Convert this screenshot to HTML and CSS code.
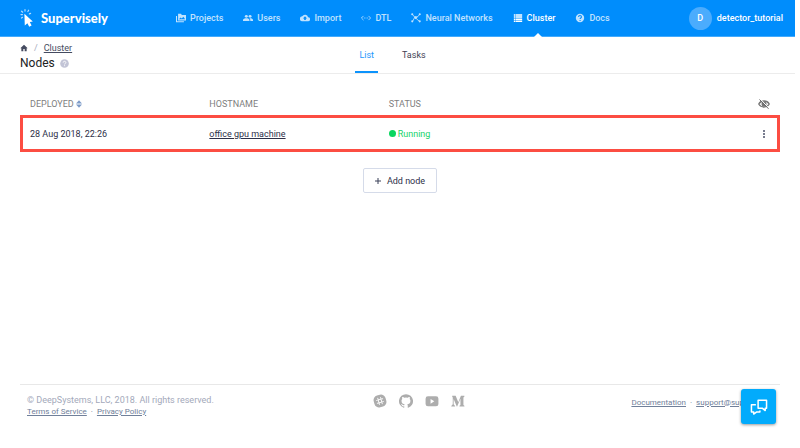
FILE: index.html
```
<!DOCTYPE html>
<html lang="en">
<head>
<meta charset="utf-8">
<meta name="viewport" content="width=device-width, initial-scale=1">
<title>Nodes - Supervisely</title>
<link rel="stylesheet" href="styles.css">
</head>
<body>
<header class="topbar">
  <a class="brand" href="#">
    <svg class="brand-mark" viewBox="0 0 14 18" aria-hidden="true"><path d="M4.400 4.800 12.800 12.400 9.800 13 11.600 16.600 9.200 17.800 7.400 14.200 4.800 16.400z" fill="#fff"/><path d="M1 5.600h1.400M1.600 2.200l1.100 1M5 .6v1.500M8.600 1.200 7.900 2.500M1.500 9l1-.7M10.600 4.400l-1.200.5" stroke="#fff" stroke-width="1.200" stroke-linecap="round" opacity=".7"/></svg>
    <span>Supervisely</span>
  </a>
  <nav class="nav" aria-label="Main">
    <a href="#"><svg viewBox="0 0 24 24" aria-hidden="true"><path fill="currentColor" fill-rule="evenodd" d="M0 7h2.500v12.500H19V22H0zM5 2h7l2 3h10v13H5zM7 15h15l-4.500-6-3.500 4-3-2.500z"/></svg>Projects</a>
    <a href="#"><svg viewBox="0 0 24 24" aria-hidden="true"><circle cx="8" cy="8" r="3.500" fill="currentColor"/><circle cx="17" cy="8" r="3.500" fill="currentColor"/><path fill="currentColor" d="M0 19v-2c0-3 4-4.500 8-4.500s7.500 1.500 7.500 4.500v2zM17.500 19v-2c0-2-.8-3.200-2-4.300 4-.4 8.500 1 8.500 4.300v2z"/></svg>Users</a>
    <a href="#"><svg viewBox="0 0 24 24" aria-hidden="true"><path fill="currentColor" fill-rule="evenodd" d="M19.400 10A7.500 7.500 0 0 0 5.400 8 6 6 0 0 0 6 20h13a5 5 0 0 0 .4-10zM14 13v4h-4v-4H7l5-5 5 5z"/></svg>Import</a>
    <a href="#"><svg viewBox="0 0 24 24" fill="none" stroke="currentColor" stroke-width="2" aria-hidden="true"><path d="M6 7 1 12l5 5M18 7l5 5-5 5"/><path d="M7 12h2M11 12h2M15 12h2"/></svg>DTL</a>
    <a href="#"><svg viewBox="0 0 24 24" fill="none" stroke="currentColor" stroke-width="2" aria-hidden="true"><path d="M3 3l6 7 7-1 5-6M9 10 4 20M9 10l11 10M16 9l-6 5"/><g fill="currentColor" stroke="none"><circle cx="3" cy="3" r="2.500"/><circle cx="21" cy="3" r="2.500"/><circle cx="3" cy="20" r="2.500"/><circle cx="21" cy="20" r="2.500"/><circle cx="11" cy="11" r="3"/></g></svg>Neural Networks</a>
    <a href="#" class="active" aria-current="page"><svg viewBox="0 0 24 24" aria-hidden="true"><path fill="currentColor" d="M2 3h4v3.500H2zM7 3h15v3.500H7zM2 8h4v3.500H2zM7 8h15v3.500H7zM2 13h4v3.500H2zM7 13h15v3.500H7zM2 18h4v3.500H2zM7 18h15v3.500H7z"/></svg>Cluster</a>
    <a href="#"><svg viewBox="0 0 24 24" aria-hidden="true"><circle cx="12" cy="12" r="10" fill="currentColor"/><path d="M8.500 9.500c0-4.500 7-4.500 7 0 0 2.500-3.300 2.500-3.300 5M12.200 16.500v2.500" fill="none" stroke="#008dfc" stroke-width="2.600"/></svg>Docs</a>
  </nav>
  <a class="user" href="#"><span class="avatar">D</span>detector_tutorial</a>
</header>

<div class="subbar">
  <div class="title">
    <nav class="crumbs" aria-label="Breadcrumb">
      <a href="#" aria-label="Home"><svg viewBox="0 0 24 24" aria-hidden="true"><path fill="currentColor" d="M12 2 1 12.500h3V22h6v-7h4v7h6v-9.500h3z"/></svg></a>
      <span class="slash">/</span>
      <a class="crumb" href="#">Cluster</a>
    </nav>
    <h1>Nodes <svg viewBox="0 0 24 24" aria-hidden="true"><circle cx="12" cy="12" r="11.500" fill="#c2c4d6"/><path d="M8.500 9.500c0-4.500 7-4.500 7 0 0 2.500-3.300 2.500-3.300 5M12.200 16.500v2.500" fill="none" stroke="#fff" stroke-width="2.400"/></svg></h1>
  </div>
  <nav class="tabs" aria-label="Views">
    <a href="#" class="selected" aria-current="page">List</a>
    <a href="#">Tasks</a>
  </nav>
</div>

<main>
  <table class="nodes">
    <thead>
      <tr>
        <th class="field">DEPLOYED <svg class="sort" viewBox="0 0 8 10" aria-hidden="true"><path d="M4 0 8 4.300H0zM4 10 0 5.700h8z" fill="#7d9bc8"/></svg></th>
        <th class="field">HOSTNAME</th>
        <th class="field">STATUS</th>
        <th class="tools"><button type="button" class="icon-button" aria-label="Hide columns"><svg class="eye" viewBox="0 0 24 24" aria-hidden="true"><path d="M1.500 12C6 4 18 4 22.500 12 18 20 6 20 1.500 12z" fill="none" stroke="#777" stroke-width="2.600"/><circle cx="12" cy="12" r="5" fill="#777"/><path d="M5 2.500 22 20.500" stroke="#fff" stroke-width="2"/><path d="M3 3 21 21.500" stroke="#666" stroke-width="2"/></svg></button></th>
      </tr>
    </thead>
    <tbody>
      <tr>
        <td>28 Aug 2018, 22:26</td>
        <td><a href="#">office gpu machine</a></td>
        <td><span class="status">Running</span></td>
        <td class="tools"><button type="button" class="icon-button" aria-label="Node actions"><svg class="dots" viewBox="0 0 4 10" aria-hidden="true"><g fill="#4b5068"><circle cx="2" cy="2" r="1"/><circle cx="2" cy="5" r="1"/><circle cx="2" cy="8" r="1"/></g></svg></button></td>
      </tr>
    </tbody>
  </table>
  <button type="button" class="add"><svg viewBox="0 0 6 6" aria-hidden="true"><path d="M3 0v6M0 3h6" stroke="#3b4058" stroke-width="1"/></svg>Add node</button>
</main>

<footer class="footer">
  <div class="legal">
    <p>© DeepSystems, LLC, 2018. All rights reserved.</p>
    <p class="links"><a href="#">Terms of Service</a><span>·</span><a href="#">Privacy Policy</a></p>
  </div>
  <div class="social">
    <a href="#" aria-label="Slack"><svg viewBox="0 0 24 24" aria-hidden="true"><g transform="rotate(-15 12 12)"><rect x="1.500" y="1.500" width="21" height="21" rx="8" fill="#adadad"/><path d="M9.500 6.500v11M14.500 6.500v11M6.500 9.500h11M6.500 14.500h11" stroke="#fff" stroke-width="1.600" stroke-linecap="round"/></g></svg></a>
    <a href="#" aria-label="GitHub"><svg viewBox="0 0 24 24" aria-hidden="true"><path fill="#adadad" d="M12 .3a12 12 0 0 0-3.800 23.400c.6.1.8-.3.8-.6v-2c-3.300.7-4-1.600-4-1.600-.6-1.400-1.400-1.800-1.400-1.800-1-.7.1-.7.1-.7 1.200 0 1.900 1.200 1.900 1.200 1 1.800 2.800 1.300 3.500 1 0-.8.4-1.300.7-1.600-2.700-.3-5.500-1.300-5.500-6 0-1.200.5-2.300 1.300-3.100-.2-.4-.6-1.600 0-3.200 0 0 1-.3 3.400 1.200a11.500 11.500 0 0 1 6 0c2.300-1.500 3.300-1.200 3.300-1.200.6 1.600.2 2.800 0 3.200.9.8 1.300 1.900 1.300 3.200 0 4.600-2.800 5.600-5.500 5.900.5.400.9 1 .9 2.200v3.300c0 .3.100.7.8.6A12 12 0 0 0 12 .3"/></svg></a>
    <a href="#" aria-label="YouTube"><svg viewBox="0 0 24 24" aria-hidden="true"><rect x="1" y="4" width="22" height="17" rx="4" fill="#adadad"/><path d="M9.500 8.500v8l6.500-4z" fill="#fff"/></svg></a>
    <a href="#" aria-label="Medium"><svg viewBox="0 0 24 24" aria-hidden="true"><path fill="#adadad" d="M2 3h6l4.500 11L17 3h6v1.300l-1.700 1.500v13l1.700 1.500v1.200h-8.500v-1.200l1.700-1.500V8l-5.700 13.500h-.6L4.500 8.500v9L7 20.500v1H.5v-1L3 17.500V6.200L2 4.300z"/></svg></a>
  </div>
  <p class="links contact"><a href="#">Documentation</a><span>·</span><a href="#">support@supervise.ly</a></p>
</footer>

<button type="button" class="chat" aria-label="Open chat"><svg viewBox="0 0 20 18" fill="none" stroke="#fff" stroke-width="1.700" stroke-linejoin="round" aria-hidden="true"><path d="M9 1.500h9.500v9h-1.500v2.500L14 10.500H9z"/><path d="M6.500 6.500h-5v8H4V17l3.500-2.500H11V13"/></svg></button>
</body>
</html>
```
FILE: styles.css
```
* {
  box-sizing: border-box;
}

body {
  display: flex;
  flex-direction: column;
  min-height: 100vh;
  margin: 0;
  padding: 0 5px 20px 0;
  background: #fff;
  color: #2d3048;
  font: 9px/12px Roboto, "Liberation Sans", sans-serif;
}

a {
  color: inherit;
}

p,
h1 {
  margin: 0;
}

button {
  font: inherit;
  cursor: pointer;
}

svg {
  display: block;
  flex: none;
}

.topbar {
  display: flex;
  align-items: center;
  height: 37px;
  padding: 0 12px 0 20px;
  background: #008dfc;
  border-bottom: 1px solid #42aafd;
  color: #fff;
}

.topbar a {
  text-decoration: none;
}

.brand {
  display: flex;
  align-items: center;
  flex: 0 0 156px;
  gap: 7px;
  font: 900 13px/18px Lato, sans-serif;
}

.brand-mark {
  width: 14px;
  height: 18px;
}

.nav {
  display: flex;
  align-self: stretch;
  gap: 20px;
  font-weight: 500;
}

.nav a {
  position: relative;
  display: flex;
  align-items: center;
  gap: 4px;
  color: #c0e2fe;
}

.nav svg {
  width: 10px;
  height: 10px;
}

.nav .active {
  color: #fff;
}

.nav .active::after {
  content: "";
  position: absolute;
  bottom: -1px;
  left: 50%;
  border: 4px solid transparent;
  border-top: 0;
  border-bottom-color: #fff;
}

.user {
  display: flex;
  align-items: center;
  gap: 5px;
  margin-left: auto;
  font-weight: 500;
}

.avatar {
  width: 23px;
  height: 23px;
  border-radius: 50%;
  background: #4bacfd;
  line-height: 23px;
  text-align: center;
}

.subbar {
  display: grid;
  grid-template-columns: 1fr auto 1fr;
  height: 37px;
  padding-right: 10px;
  border-bottom: 1px solid #ececec;
}

.title {
  padding: 5px 0 0 20px;
}

.crumbs {
  display: flex;
  align-items: center;
  gap: 6px;
  color: #454b60;
}

.crumbs svg {
  width: 8px;
  height: 8px;
}

.slash {
  color: #a5acbd;
}

h1 {
  display: flex;
  align-items: center;
  gap: 5px;
  color: #222;
  font-size: 12px;
  font-weight: 400;
  line-height: 18px;
}

h1 svg {
  width: 9px;
  height: 9px;
}

.tabs {
  display: flex;
  gap: 20px;
}

.tabs a {
  padding: 12px 4px 0;
  color: #3f4254;
  text-decoration: none;
}

.tabs .selected {
  border-bottom: 2px solid #0c93fc;
  color: #1c97fc;
}

main {
  flex: 1;
  padding: 18px 15px 0 20px;
  text-align: center;
}

.nodes {
  width: 100%;
  border-spacing: 0;
  table-layout: fixed;
  text-align: left;
}

.nodes th,
.nodes td {
  padding: 0 0 0 10px;
}

.nodes th {
  height: 23px;
  color: #808080;
  font-weight: 400;
}

.nodes .field {
  width: 23.6%;
}

.nodes td {
  height: 37px;
  border: solid #fc4d42;
  border-width: 3px 0;
}

.nodes td:first-child {
  border-left-width: 3px;
  padding-left: 7px;
}

.nodes td:last-child {
  border-right-width: 3px;
}

.nodes th.tools {
  padding-right: 8px;
}

.nodes td.tools {
  padding-right: 5px;
}

.icon-button {
  display: flex;
  justify-content: center;
  width: 16px;
  margin-left: auto;
  padding: 0;
  border: 0;
  background: none;
}

.sort {
  display: inline-block;
  width: 6px;
  height: 8px;
  vertical-align: -1px;
}

.eye {
  width: 12px;
  height: 12px;
}

.dots {
  width: 4px;
  height: 10px;
}

.status {
  display: flex;
  align-items: center;
  gap: 2px;
  color: #18d368;
}

.status::before {
  content: "";
  width: 7px;
  height: 7px;
  border-radius: 50%;
  background: #08d65f;
}

.add {
  display: inline-flex;
  align-items: center;
  gap: 6px;
  height: 25px;
  margin-top: 16px;
  padding: 0 11px;
  border: 1px solid #d5dbe9;
  border-radius: 2px;
  background: #fff;
  color: #2d3048;
}

.add svg {
  width: 6px;
  height: 6px;
}

.footer {
  display: flex;
  align-items: start;
  justify-content: space-between;
  height: 44px;
  margin: 0 15px 0 20px;
  padding: 9px 7px 0;
  border-top: 1px solid #e8e8e8;
  color: #a3a9ba;
}

.links {
  display: flex;
  gap: 4px;
  color: #70809a;
  font-size: 8px;
}

.social {
  display: flex;
  gap: 12px;
  padding-right: 8px;
}

.social svg {
  width: 14px;
  height: 14px;
}

.contact {
  padding-top: 3px;
}

.chat {
  position: fixed;
  right: 24px;
  bottom: 24px;
  display: flex;
  align-items: center;
  justify-content: center;
  width: 35px;
  height: 35px;
  padding: 0;
  border: 0;
  border-radius: 3px;
  background: #02abfc;
  box-shadow: 0 1px 3px rgba(0, 0, 0, 0.4);
}

.chat svg {
  width: 18px;
  height: 16px;
}
```
